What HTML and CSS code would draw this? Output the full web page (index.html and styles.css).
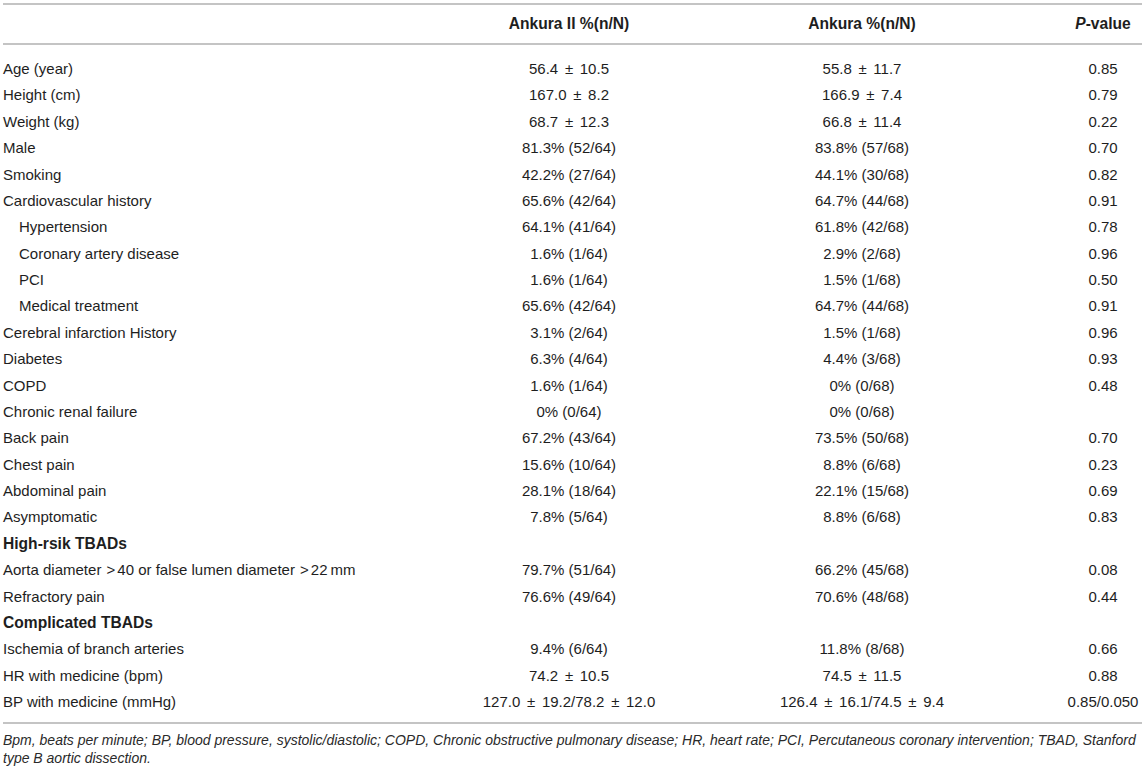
FILE: index.html
```html
<!DOCTYPE html>
<html lang="en">
<head>
<meta charset="utf-8">
<title>Baseline characteristics</title>
<link rel="stylesheet" href="styles.css">
</head>
<body>
<div class="wrap">
<table class="data">
  <colgroup>
    <col class="c1"><col class="c2"><col class="c3"><col class="c4">
  </colgroup>
  <thead>
    <tr>
      <th class="lbl"></th>
      <th>Ankura II %(n/N)</th>
      <th>Ankura %(n/N)</th>
      <th><i>P</i>-value</th>
    </tr>
  </thead>
  <tbody>
    <tr class="first"><td class="lbl">Age (year)</td><td>56.4 <span class="pm">±</span> 10.5</td><td>55.8 <span class="pm">±</span> 11.7</td><td>0.85</td></tr>
    <tr><td class="lbl">Height (cm)</td><td>167.0 <span class="pm">±</span> 8.2</td><td>166.9 <span class="pm">±</span> 7.4</td><td>0.79</td></tr>
    <tr><td class="lbl">Weight (kg)</td><td>68.7 <span class="pm">±</span> 12.3</td><td>66.8 <span class="pm">±</span> 11.4</td><td>0.22</td></tr>
    <tr><td class="lbl">Male</td><td>81.3% (52/64)</td><td>83.8% (57/68)</td><td>0.70</td></tr>
    <tr><td class="lbl">Smoking</td><td>42.2% (27/64)</td><td>44.1% (30/68)</td><td>0.82</td></tr>
    <tr><td class="lbl">Cardiovascular history</td><td>65.6% (42/64)</td><td>64.7% (44/68)</td><td>0.91</td></tr>
    <tr><td class="lbl sub">Hypertension</td><td>64.1% (41/64)</td><td>61.8% (42/68)</td><td>0.78</td></tr>
    <tr><td class="lbl sub">Coronary artery disease</td><td>1.6% (1/64)</td><td>2.9% (2/68)</td><td>0.96</td></tr>
    <tr><td class="lbl sub">PCI</td><td>1.6% (1/64)</td><td>1.5% (1/68)</td><td>0.50</td></tr>
    <tr><td class="lbl sub">Medical treatment</td><td>65.6% (42/64)</td><td>64.7% (44/68)</td><td>0.91</td></tr>
    <tr><td class="lbl">Cerebral infarction History</td><td>3.1% (2/64)</td><td>1.5% (1/68)</td><td>0.96</td></tr>
    <tr><td class="lbl">Diabetes</td><td>6.3% (4/64)</td><td>4.4% (3/68)</td><td>0.93</td></tr>
    <tr><td class="lbl">COPD</td><td>1.6% (1/64)</td><td>0% (0/68)</td><td>0.48</td></tr>
    <tr><td class="lbl">Chronic renal failure</td><td>0% (0/64)</td><td>0% (0/68)</td><td></td></tr>
    <tr><td class="lbl">Back pain</td><td>67.2% (43/64)</td><td>73.5% (50/68)</td><td>0.70</td></tr>
    <tr><td class="lbl">Chest pain</td><td>15.6% (10/64)</td><td>8.8% (6/68)</td><td>0.23</td></tr>
    <tr><td class="lbl">Abdominal pain</td><td>28.1% (18/64)</td><td>22.1% (15/68)</td><td>0.69</td></tr>
    <tr><td class="lbl">Asymptomatic</td><td>7.8% (5/64)</td><td>8.8% (6/68)</td><td>0.83</td></tr>
    <tr><td class="lbl sect">High-rsik TBADs</td><td></td><td></td><td></td></tr>
    <tr><td class="lbl">Aorta diameter <span class="gt">&gt;</span>40 or false lumen diameter <span class="gt">&gt;</span>22&#8201;mm</td><td>79.7% (51/64)</td><td>66.2% (45/68)</td><td>0.08</td></tr>
    <tr><td class="lbl">Refractory pain</td><td>76.6% (49/64)</td><td>70.6% (48/68)</td><td>0.44</td></tr>
    <tr><td class="lbl sect">Complicated TBADs</td><td></td><td></td><td></td></tr>
    <tr><td class="lbl">Ischemia of branch arteries</td><td>9.4% (6/64)</td><td>11.8% (8/68)</td><td>0.66</td></tr>
    <tr><td class="lbl">HR with medicine (bpm)</td><td>74.2 <span class="pm">±</span> 10.5</td><td>74.5 <span class="pm">±</span> 11.5</td><td>0.88</td></tr>
    <tr class="last"><td class="lbl">BP with medicine (mmHg)</td><td>127.0 <span class="pm">±</span> 19.2/78.2 <span class="pm">±</span> 12.0</td><td>126.4 <span class="pm">±</span> 16.1/74.5 <span class="pm">±</span> 9.4</td><td>0.85/0.050</td></tr>
  </tbody>
</table>
<p class="note">Bpm, beats per minute; BP, blood pressure, systolic/diastolic; COPD, Chronic obstructive pulmonary disease; HR, heart rate; PCI, Percutaneous coronary intervention; TBAD, Stanford type B aortic dissection.</p>
</div>
</body>
</html>
```
FILE: styles.css
```css
html, body {
  margin: 0;
  padding: 0;
  background: #ffffff;
}

body {
  font-family: "Liberation Sans", Arial, Helvetica, sans-serif;
  color: #1e1e1e;
}

.wrap {
  padding: 3px 3px 0 3px;
}

.data {
  width: 100%;
  border-collapse: collapse;
  table-layout: fixed;
  font-size: 15px;
}

.c1 { width: 475px; }
.c2 { width: 182px; }
.c3 { width: 404px; }
.c4 { width: 78px; }

.data thead tr {
  border-top: 2px solid #c4c4c4;
  border-bottom: 2px solid #c4c4c4;
}

.data th {
  font-weight: bold;
  font-size: 15.6px;
  line-height: 18px;
  padding: 10px 0;
  text-align: center;
  white-space: nowrap;
}

.data td {
  line-height: 18px;
  padding: 4.19px 0;
  text-align: center;
  white-space: nowrap;
}

.data td.lbl,
.data th.lbl {
  text-align: left;
}

.data td.sub {
  padding-left: 16px;
}

.data td.sect {
  font-weight: bold;
  font-size: 15.6px;
}

.data tr.first td {
  padding-top: 15px;
}

.data tr.last td {
  padding-bottom: 11px;
}

.data tbody tr.last {
  border-bottom: 2px solid #c4c4c4;
}

.pm {
  margin: 0 2.5px;
}

.gt {
  margin: 0 2px 0 1px;
}

.note {
  margin: 7px 0 0 0;
  font-size: 14px;
  line-height: 18px;
  font-style: italic;
  color: #2a2a2a;
}
```
